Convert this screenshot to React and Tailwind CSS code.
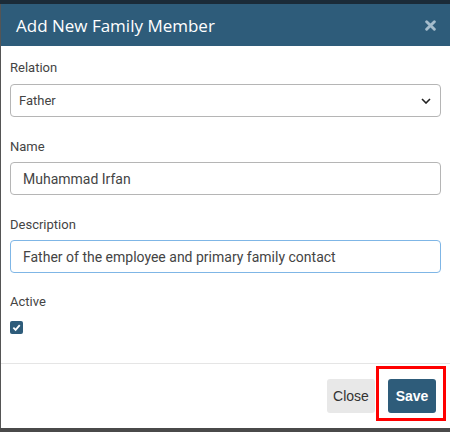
import React, { useState } from "react";

export default function App() {
  const [relation, setRelation] = useState("Father");
  const [name, setName] = useState("Muhammad Irfan");
  const [description, setDescription] = useState(
    "Father of the employee and primary family contact"
  );
  const [active, setActive] = useState(true);

  return (
    <div className="w-[450px] h-[432px] flex flex-col bg-[#505050] overflow-hidden font-['Roboto',sans-serif]">
      {/* page behind the modal */}
      <div className="h-[4px] bg-[#1b2b38]" />

      <div className="flex flex-1">
        <div className="w-[1px] bg-[#555]" />

        <div className="flex-1 flex flex-col bg-white">
          {/* Header */}
          <div className="h-[42px] bg-[#2e5c7a] flex items-center justify-between pl-[15px] pr-[14px]">
            <h1 className="text-[17px] text-white font-['Open_Sans',sans-serif] leading-none">
              Add New Family Member
            </h1>
            <svg width="11" height="11" viewBox="0 0 10 10" className="mt-[1px]">
              <path
                d="M1.5 1.5 L8.5 8.5 M8.5 1.5 L1.5 8.5"
                stroke="#a4bccc"
                strokeWidth="2.6"
                strokeLinecap="round"
              />
            </svg>
          </div>

          {/* Body */}
          <div className="flex flex-col px-[9px] pt-[13px] border-b border-[#e5e5e5] h-[318px]">
            <label className="text-[13px] leading-[18px] text-[#444] mb-[7px]">Relation</label>
            <div className="relative">
              <select
                value={relation}
                onChange={(e) => setRelation(e.target.value)}
                className="appearance-none w-full h-[33px] border border-[#b5b5b5] rounded-[4px] pl-[8px] text-[13px] text-[#444] bg-white outline-none"
              >
                <option>Father</option>
                <option>Mother</option>
                <option>Spouse</option>
                <option>Child</option>
              </select>
              <svg
                width="10"
                height="6"
                viewBox="0 0 10 6"
                className="absolute right-[10px] top-[14px] pointer-events-none"
              >
                <path d="M1 1 L5 5 L9 1" fill="none" stroke="#222" strokeWidth="1.6" />
              </svg>
            </div>

            <label className="text-[13px] leading-[18px] text-[#444] mt-[21px] mb-[6px]">Name</label>
            <input
              value={name}
              onChange={(e) => setName(e.target.value)}
              className="w-full h-[33px] border border-[#b5b5b5] rounded-[4px] px-[12px] text-[14px] text-[#444] outline-none"
            />

            <label className="text-[13px] leading-[18px] text-[#444] mt-[21px] mb-[6px]">Description</label>
            <input
              value={description}
              onChange={(e) => setDescription(e.target.value)}
              className="w-full h-[33px] border border-[#7fb6e6] rounded-[4px] px-[12px] text-[14px] text-[#444] outline-none"
            />

            <label className="text-[13px] leading-[18px] text-[#444] mt-[20px] mb-[10px]">Active</label>
            <button
              onClick={() => setActive(!active)}
              className={`w-[13px] h-[13px] rounded-[2px] flex items-center justify-center ${
                active ? "bg-[#2e5c7a]" : "border border-[#888] bg-white"
              }`}
            >
              {active && (
                <svg width="9" height="9" viewBox="0 0 10 10">
                  <path
                    d="M1.5 5.2 L4 7.6 L8.6 2.4"
                    fill="none"
                    stroke="white"
                    strokeWidth="2"
                  />
                </svg>
              )}
            </button>
          </div>

          {/* Footer */}
          <div className="flex-1 flex justify-end items-start pt-[15px] pr-[14px] gap-[13px] font-['Liberation_Sans',sans-serif]">
            <button className="h-[34px] w-[48px] rounded-[3px] bg-[#e8e8e8] text-[14px] text-[#333]">
              Close
            </button>
            <div className="relative">
              <button className="h-[34px] w-[48px] rounded-[3px] bg-[#2e5c7a] text-[14px] font-bold text-white">
                Save
              </button>
              <div className="absolute -left-[12px] -top-[13px] w-[70px] h-[55px] border-[3px] border-[#ff0000] pointer-events-none" />
            </div>
          </div>
        </div>
      </div>

      <div className="h-[4px] bg-[#4a4a4a]" />
    </div>
  );
}
